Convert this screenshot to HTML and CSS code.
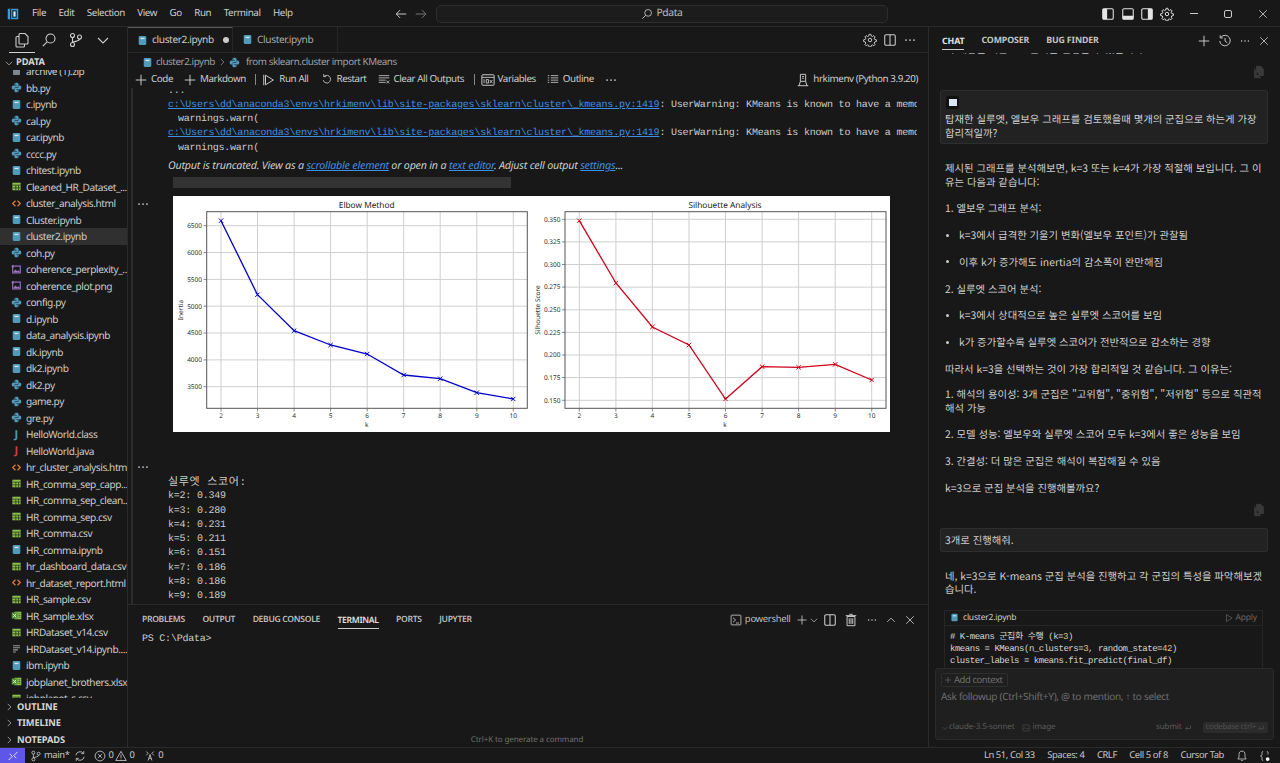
FILE: index.html
```html
<!DOCTYPE html>
<html lang="ko">
<head>
<meta charset="utf-8">
<title>Pdata</title>
<link rel="stylesheet" href="styles.css">
</head>
<body>
<svg class="defs" width="0" height="0">
  <defs>
    <symbol id="i-nb" viewBox="0 0 16 16"><rect x="2.5" y="1.5" width="11" height="13" rx="1.6" fill="#519aba"/><rect x="5" y="4" width="6" height="2" fill="#cfe6f2"/></symbol>
    <symbol id="i-py" viewBox="0 0 16 16"><g fill="#519aba" fill-rule="evenodd"><path d="M8 1C5.7 1 5 2 5 3v1.4h3.3V5H3.4C2 5 1 6.2 1 8s1 3 2.4 3H5V9.4c0-1 .8-1.9 2-1.900h2.300c1 0 1.700-.7 1.700-1.700V3c0-1-.9-2-3-2zM6.500 2.200a.7.7 0 110 1.400.7.7 0 010-1.400z"/><path d="M8 15c2.300 0 3-1 3-2v-1.400H7.700V11h4.900C14 11 15 9.800 15 8s-1-3-2.400-3H11v1.600c0 1-.8 1.900-2 1.900H6.700c-1 0-1.700.7-1.700 1.700V13c0 1 .9 2 3 2zM9.500 13.800a.7.7 0 110-1.400.7.7 0 010 1.400z"/></g></symbol>
    <symbol id="i-csv" viewBox="0 0 16 16"><rect x="2" y="2.500" width="12" height="11" fill="#8dc149"/><path d="M2 6h12M2 10h12M7 6v7.500M11 6v7.500" stroke="#2c3a18" stroke-width="1.200"/></symbol>
    <symbol id="i-html" viewBox="0 0 16 16"><path d="M6.500 4 2.500 8l4 4M9.500 4l4 4-4 4" fill="none" stroke="#e37933" stroke-width="1.800"/></symbol>
    <symbol id="i-img" viewBox="0 0 16 16"><rect x="2.500" y="3" width="11" height="10" fill="none" stroke="#a074c4" stroke-width="1.600"/><path d="M3 12l3.500-4 2.500 2.500 2-1.500 2 3z" fill="#a074c4"/><rect x="1" y="2" width="3" height="3" fill="#a074c4"/></symbol>
    <symbol id="i-xls" viewBox="0 0 16 16"><rect x="5" y="2.500" width="10" height="11" fill="#8dc149"/><rect x="1" y="3.500" width="8.500" height="9" fill="#4d8f33"/><path d="M3 5.500l4.500 5M7.500 5.500l-4.500 5" stroke="#e8f5dc" stroke-width="1.300"/><path d="M11 5.500h2.500M11 8h2.500M11 10.500h2.500" stroke="#2c3a18"/></symbol>
    <symbol id="i-txt" viewBox="0 0 16 16"><path d="M3 4h10M3 7h10M3 10h7M3 13h4" stroke="#999" stroke-width="1.500" fill="none"/></symbol>
    <symbol id="i-zip" viewBox="0 0 16 16"><rect x="3" y="4" width="10" height="9" fill="#7d8a94"/><rect x="3" y="4" width="10" height="2" fill="#aab4bb"/></symbol>
    <symbol id="i-chev-r" viewBox="0 0 16 16"><path d="M6 3l5 5-5 5" fill="none" stroke="currentColor" stroke-width="1.100"/></symbol>
    <symbol id="i-chev-d" viewBox="0 0 16 16"><path d="M3 6l5 5 5-5" fill="none" stroke="currentColor" stroke-width="1.100"/></symbol>
    <symbol id="i-plus" viewBox="0 0 16 16"><path d="M8 2v12M2 8h12" stroke="currentColor" stroke-width="1.100" fill="none"/></symbol>
    <symbol id="i-close" viewBox="0 0 16 16"><path d="M3 3l10 10M13 3L3 13" stroke="currentColor" stroke-width="1.100" fill="none"/></symbol>
    <symbol id="i-more" viewBox="0 0 16 16"><g fill="currentColor"><circle cx="3.500" cy="8" r="1"/><circle cx="8" cy="8" r="1"/><circle cx="12.500" cy="8" r="1"/></g></symbol>
    <symbol id="i-gear" viewBox="0 0 16 16"><g fill="none" stroke="currentColor" stroke-width="1.100"><circle cx="8" cy="8" r="2"/><path d="M7 1.500h2l.4 1.900 1.400.6 1.600-1 1.400 1.400-1 1.600.6 1.400 1.900.4v2l-1.900.4-.6 1.400 1 1.600-1.400 1.400-1.600-1-1.400.6-.4 1.900H7l-.4-1.900-1.400-.6-1.600 1-1.400-1.400 1-1.600-.6-1.400-1.900-.4v-2l1.900-.4.600-1.400-1-1.600 1.400-1.400 1.600 1 1.400-.6z"/></g></symbol>
    <symbol id="i-split" viewBox="0 0 16 16"><rect x="2" y="2" width="12" height="12" rx="1.500" fill="none" stroke="currentColor" stroke-width="1.200"/><path d="M8 2v12" stroke="currentColor" stroke-width="1.200"/></symbol>
    <symbol id="i-search" viewBox="0 0 16 16"><circle cx="9.500" cy="6.500" r="4.500" fill="none" stroke="currentColor" stroke-width="1.100"/><path d="M6.200 9.800 1.800 14.200" stroke="currentColor" stroke-width="1.200"/></symbol>
    <symbol id="i-arrow" viewBox="0 0 16 16"><path d="M14 8H2.500M7 3.500 2.500 8 7 12.500" fill="none" stroke="currentColor" stroke-width="1.100"/></symbol>
    <symbol id="i-files" viewBox="0 0 16 16"><g fill="none" stroke="currentColor" stroke-width="1.100"><path d="M6 1.500h5l3 3V11a1 1 0 01-1 1H6a1 1 0 01-1-1V2.500a1 1 0 011-1z"/><path d="M5 4.500H3a1 1 0 00-1 1V14a1 1 0 001 1h6.500a1 1 0 001-1v-2"/></g></symbol>
    <symbol id="i-branch" viewBox="0 0 16 16"><g fill="none" stroke="currentColor" stroke-width="1.100"><circle cx="4.500" cy="3.500" r="2"/><circle cx="4.500" cy="12.500" r="2"/><circle cx="11.500" cy="5" r="2"/><path d="M4.500 5.500v5M11.500 7c0 2.500-5 2-7 3.500"/></g></symbol>
    <symbol id="i-run" viewBox="0 0 16 16"><path d="M4 2.500 13 8l-9 5.500z" fill="none" stroke="currentColor" stroke-width="1.100"/><path d="M2 2v12" stroke="currentColor" stroke-width="1.100"/></symbol>
    <symbol id="i-restart" viewBox="0 0 16 16"><path d="M4 4.500A5.200 5.200 0 118 13.500a5.200 5.200 0 01-5-4M3.500 1.500v3.300h3.300" fill="none" stroke="currentColor" stroke-width="1.100"/></symbol>
    <symbol id="i-clear" viewBox="0 0 16 16"><path d="M1 3.500h14M1 6.500h14M1 9.500h9M1 12.500h9M11 10l4 4M15 10l-4 4" stroke="currentColor" stroke-width="1.100" fill="none"/></symbol>
    <symbol id="i-vars" viewBox="0 0 16 16"><rect x="1" y="2" width="14" height="12" rx="1" fill="none" stroke="currentColor" stroke-width="1.100"/><path d="M1 5h14M3.500 7v4.500M6 7.500v4h2.500v-4zM10 8l3 3.500M13 8l-3 3.500" fill="none" stroke="currentColor"/></symbol>
    <symbol id="i-outline" viewBox="0 0 16 16"><path d="M1 3.500h2M5 3.500h10M1 6.500h2M5 6.500h10M1 9.500h2M5 9.500h10M1 12.500h2M5 12.500h10" stroke="currentColor" stroke-width="1.100" fill="none"/></symbol>
    <symbol id="i-server" viewBox="0 0 16 16"><g fill="none" stroke="currentColor" stroke-width="1.100"><path d="M5 1.500h6v8H5zM7 4h2M7 6h2"/><path d="M3.500 14.500l1.500-5M12.500 14.500l-1.500-5M2 14.500h12"/></g></symbol>
    <symbol id="i-trash" viewBox="0 0 16 16"><path d="M3.500 4h9v10.500h-9zM2 3h12M6 1.500h4M6 6v6.500M8 6v6.500M10 6v6.500" fill="none" stroke="currentColor" stroke-width="1.100"/></symbol>
    <symbol id="i-term" viewBox="0 0 16 16"><rect x="1.500" y="1.500" width="13" height="13" rx="1" fill="none" stroke="currentColor" stroke-width="1.100"/><path d="M4 5l3.500 3L4 11M8 12h4" fill="none" stroke="currentColor" stroke-width="1.100"/></symbol>
    <symbol id="i-up" viewBox="0 0 16 16"><path d="M3 10.500l5-5 5 5" fill="none" stroke="currentColor" stroke-width="1.100"/></symbol>
    <symbol id="i-panel-l" viewBox="0 0 16 16"><rect x="2" y="2" width="12" height="12" rx="1.500" fill="none" stroke="currentColor" stroke-width="1.200"/><rect x="2" y="2" width="5" height="12" fill="currentColor"/></symbol>
    <symbol id="i-panel-r" viewBox="0 0 16 16"><rect x="2" y="2" width="12" height="12" rx="1.500" fill="none" stroke="currentColor" stroke-width="1.200"/><rect x="9" y="2" width="5" height="12" fill="currentColor"/></symbol>
    <symbol id="i-panel-b" viewBox="0 0 16 16"><rect x="2" y="2" width="12" height="12" rx="1.500" fill="none" stroke="currentColor" stroke-width="1.200"/><rect x="2" y="10" width="12" height="4" fill="currentColor"/></symbol>
    <symbol id="i-history" viewBox="0 0 16 16"><path d="M3.500 3.500A6 6 0 112 8M2.500 1.500v3h3M8 4.500V8l2.500 2" fill="none" stroke="currentColor" stroke-width="1.100"/></symbol>
    <symbol id="i-copy" viewBox="0 0 16 16"><path d="M5 1.500h5l3 3V12H5zM3 4v10.500h7" fill="#3a3a3a" stroke="#3a3a3a"/></symbol>
    <symbol id="i-sync" viewBox="0 0 16 16"><path d="M2.500 7a5.600 5.600 0 0110-2.500M13.500 9a5.600 5.600 0 01-10 2.500M13 1.500v3.300H9.700M3 14.500v-3.300h3.300" fill="none" stroke="currentColor" stroke-width="1.100"/></symbol>
    <symbol id="i-error" viewBox="0 0 16 16"><circle cx="8" cy="8" r="6.500" fill="none" stroke="currentColor" stroke-width="1.100"/><path d="M5.500 5.500l5 5M10.500 5.500l-5 5" stroke="currentColor" stroke-width="1.100"/></symbol>
    <symbol id="i-warn" viewBox="0 0 16 16"><path d="M8 1.800 15 14H1zM8 6v4.500M8 11.500v1" fill="none" stroke="currentColor" stroke-width="1.100"/></symbol>
    <symbol id="i-ports" viewBox="0 0 16 16"><path d="M3 2l2.500 2.500L3 7M13 2l-2.500 2.500L13 7M5.500 14l2.500-8 2.500 8M6.500 11h3" fill="none" stroke="currentColor" stroke-width="1.100"/></symbol>
    <symbol id="i-remote" viewBox="0 0 16 16"><path d="M2 13.500l5-5-3.500-3.500M14 2.500l-5 5 3.500 3.500" fill="none" stroke="currentColor" stroke-width="1.100"/></symbol>
    <symbol id="i-bell" viewBox="0 0 16 16"><path d="M8 1.500c-3 0-4 2-4 4.500v3.500L2.500 12h11L12 9.500V6c0-2.500-1-4.500-4-4.500zM6.500 13.500c.3 1 2.700 1 3 0" fill="none" stroke="currentColor" stroke-width="1.100"/></symbol>
    <symbol id="i-braces" viewBox="0 0 16 16"><path d="M5.500 2C3.500 2 4 4 4 6c0 1-1 2-2 2 1 0 2 1 2 2 0 2-.5 4 1.500 4M10.500 2c2 0 1.500 2 1.500 4" fill="none" stroke="currentColor" stroke-width="1.100"/><circle cx="11.500" cy="12" r="2.500" fill="#fff"/></symbol>
    <symbol id="i-mini" viewBox="0 0 16 16"><rect x="1.500" y="2" width="13" height="12" rx="1" fill="none" stroke="currentColor"/><path d="M2 11l4-4 3 3 2-2 3 3" stroke="currentColor" fill="none"/></symbol>
    <symbol id="i-enter" viewBox="0 0 16 16"><path d="M13 3v6H4M7 5.500 3.500 9 7 12.500" fill="none" stroke="currentColor" stroke-width="1.300"/></symbol>
    <symbol id="i-logo" viewBox="0 0 16 16"><rect x="1" y="1" width="14" height="14" fill="#3b9ad9"/><rect x="4" y="1" width="1.500" height="14" fill="#0f2a3a"/><rect x="7" y="3" width="6" height="10" fill="#0f2a3a"/><rect x="8.500" y="4.500" width="3" height="7" fill="#d7ecf8"/></symbol>
    <symbol id="i-stop" viewBox="0 0 16 16"><path d="M4 2.500 13 8l-9 5.500z" fill="none" stroke="currentColor" stroke-width="1.100"/></symbol>
    <marker id="mk-b" viewBox="0 0 6 6" refX="3" refY="3" markerWidth="6" markerHeight="6" markerUnits="userSpaceOnUse"><path d="M.8.800l4.400 4.400M5.200.800.800 5.200" stroke="#0000c8" stroke-width="1" fill="none"/></marker>
    <marker id="mk-r" viewBox="0 0 6 6" refX="3" refY="3" markerWidth="6" markerHeight="6" markerUnits="userSpaceOnUse"><path d="M.8.800l4.400 4.400M5.200.800.800 5.200" stroke="#d0001a" stroke-width="1" fill="none"/></marker>
  </defs>
</svg>

<div class="app">
  <header class="titlebar">
    <svg class="ic logo"><use href="#i-logo"/></svg>
    <nav class="menu">
      <span>File</span><span>Edit</span><span>Selection</span><span>View</span><span>Go</span><span>Run</span><span>Terminal</span><span>Help</span>
    </nav>
    <div class="nav-arrows">
      <svg class="ic"><use href="#i-arrow"/></svg>
      <svg class="ic flip dim"><use href="#i-arrow"/></svg>
    </div>
    <div class="cmd"><svg class="ic sm"><use href="#i-search"/></svg><span>Pdata</span></div>
    <div class="win">
      <div class="layout-btns">
        <svg class="ic"><use href="#i-panel-l"/></svg>
        <svg class="ic"><use href="#i-panel-b"/></svg>
        <svg class="ic"><use href="#i-panel-r"/></svg>
        <svg class="ic"><use href="#i-gear"/></svg>
      </div>
      <span class="win-btn"><span class="w-min"></span></span>
      <span class="win-btn"><span class="w-max"></span></span>
      <span class="win-btn"><svg class="ic sm"><use href="#i-close"/></svg></span>
    </div>
  </header>

  <div class="main">
    <aside class="sidebar">
      <div class="activity">
        <span class="act act-on"><svg class="ic lg"><use href="#i-files"/></svg></span>
        <span class="act"><svg class="ic lg"><use href="#i-search"/></svg></span>
        <span class="act"><svg class="ic lg"><use href="#i-branch"/></svg></span>
        <span class="act"><svg class="ic lg"><use href="#i-chev-d"/></svg></span>
      </div>
      <div class="side-head"><svg class="ic xs"><use href="#i-chev-d"/></svg><b>PDATA</b></div>
      <div class="tree">
        <ul class="files">
          <li><svg class="fi"><use href="#i-zip"/></svg>archive (1).zip</li>
          <li><svg class="fi"><use href="#i-py"/></svg>bb.py</li>
          <li><svg class="fi"><use href="#i-nb"/></svg>c.ipynb</li>
          <li><svg class="fi"><use href="#i-py"/></svg>cal.py</li>
          <li><svg class="fi"><use href="#i-nb"/></svg>car.ipynb</li>
          <li><svg class="fi"><use href="#i-py"/></svg>cccc.py</li>
          <li><svg class="fi"><use href="#i-nb"/></svg>chitest.ipynb</li>
          <li><svg class="fi"><use href="#i-csv"/></svg>Cleaned_HR_Dataset_...</li>
          <li><svg class="fi"><use href="#i-html"/></svg>cluster_analysis.html</li>
          <li><svg class="fi"><use href="#i-nb"/></svg>Cluster.ipynb</li>
          <li class="sel"><svg class="fi"><use href="#i-nb"/></svg>cluster2.ipynb</li>
          <li><svg class="fi"><use href="#i-py"/></svg>coh.py</li>
          <li><svg class="fi"><use href="#i-img"/></svg>coherence_perplexity_...</li>
          <li><svg class="fi"><use href="#i-img"/></svg>coherence_plot.png</li>
          <li><svg class="fi"><use href="#i-py"/></svg>config.py</li>
          <li><svg class="fi"><use href="#i-nb"/></svg>d.ipynb</li>
          <li><svg class="fi"><use href="#i-nb"/></svg>data_analysis.ipynb</li>
          <li><svg class="fi"><use href="#i-nb"/></svg>dk.ipynb</li>
          <li><svg class="fi"><use href="#i-nb"/></svg>dk2.ipynb</li>
          <li><svg class="fi"><use href="#i-py"/></svg>dk2.py</li>
          <li><svg class="fi"><use href="#i-py"/></svg>game.py</li>
          <li><svg class="fi"><use href="#i-py"/></svg>gre.py</li>
          <li><span class="fj fj-b">J</span>HelloWorld.class</li>
          <li><span class="fj fj-r">J</span>HelloWorld.java</li>
          <li><svg class="fi"><use href="#i-html"/></svg>hr_cluster_analysis.html</li>
          <li><svg class="fi"><use href="#i-csv"/></svg>HR_comma_sep_capp...</li>
          <li><svg class="fi"><use href="#i-csv"/></svg>HR_comma_sep_clean...</li>
          <li><svg class="fi"><use href="#i-csv"/></svg>HR_comma_sep.csv</li>
          <li><svg class="fi"><use href="#i-csv"/></svg>HR_comma.csv</li>
          <li><svg class="fi"><use href="#i-nb"/></svg>HR_comma.ipynb</li>
          <li><svg class="fi"><use href="#i-csv"/></svg>hr_dashboard_data.csv</li>
          <li><svg class="fi"><use href="#i-html"/></svg>hr_dataset_report.html</li>
          <li><svg class="fi"><use href="#i-csv"/></svg>HR_sample.csv</li>
          <li><svg class="fi"><use href="#i-xls"/></svg>HR_sample.xlsx</li>
          <li><svg class="fi"><use href="#i-csv"/></svg>HRDataset_v14.csv</li>
          <li><svg class="fi"><use href="#i-txt"/></svg>HRDataset_v14.ipynb....</li>
          <li><svg class="fi"><use href="#i-nb"/></svg>ibm.ipynb</li>
          <li><svg class="fi"><use href="#i-xls"/></svg>jobplanet_brothers.xlsx</li>
          <li><svg class="fi"><use href="#i-csv"/></svg>jobplanet_s.csv</li>
        </ul>
      </div>
      <div class="side-sec"><svg class="ic xs"><use href="#i-chev-r"/></svg><b>OUTLINE</b></div>
      <div class="side-sec"><svg class="ic xs"><use href="#i-chev-r"/></svg><b>TIMELINE</b></div>
      <div class="side-sec"><svg class="ic xs"><use href="#i-chev-r"/></svg><b>NOTEPADS</b></div>
    </aside>

    <section class="editor">
      <div class="tabs">
        <div class="tab tab-on"><svg class="fi"><use href="#i-nb"/></svg><span>cluster2.ipynb</span><i class="dot"></i></div>
        <div class="tab"><svg class="fi"><use href="#i-nb"/></svg><span>Cluster.ipynb</span></div>
        <div class="tab-actions">
          <svg class="ic"><use href="#i-gear"/></svg>
          <svg class="ic"><use href="#i-split"/></svg>
          <svg class="ic"><use href="#i-more"/></svg>
        </div>
      </div>
      <div class="crumbs">
        <svg class="fi"><use href="#i-nb"/></svg><span>cluster2.ipynb</span>
        <svg class="ic xs"><use href="#i-chev-r"/></svg>
        <svg class="fi"><use href="#i-py"/></svg><span class="crumb-last">from sklearn.cluster import KMeans</span>
      </div>
      <div class="nb-tools">
        <span class="tool t-code"><svg class="ic"><use href="#i-plus"/></svg>Code</span>
        <span class="tool t-md"><svg class="ic"><use href="#i-plus"/></svg>Markdown</span>
        <i class="vsep"></i>
        <span class="tool t-run"><svg class="ic"><use href="#i-run"/></svg>Run All</span>
        <span class="tool t-rs"><svg class="ic sm"><use href="#i-restart"/></svg>Restart</span>
        <span class="tool t-cl"><svg class="ic sm"><use href="#i-clear"/></svg>Clear All Outputs</span>
        <i class="vsep"></i>
        <span class="tool t-var"><svg class="ic"><use href="#i-vars"/></svg>Variables</span>
        <span class="tool t-out"><svg class="ic sm"><use href="#i-outline"/></svg>Outline</span>
        <svg class="ic t-more"><use href="#i-more"/></svg>
        <span class="tool kernel"><svg class="ic"><use href="#i-server"/></svg>hrkimenv (Python 3.9.20)</span>
      </div>

      <div class="notebook">
        <div class="out-a mono">
          <div>...</div>
          <div class="ln"><a>c:\Users\dd\anaconda3\envs\hrkimenv\lib\site-packages\sklearn\cluster\_kmeans.py:1419</a>: UserWarning: KMeans is known to have a memory leak on Windows with MKL</div>
          <div class="ln ind">warnings.warn(</div>
          <div class="ln"><a>c:\Users\dd\anaconda3\envs\hrkimenv\lib\site-packages\sklearn\cluster\_kmeans.py:1419</a>: UserWarning: KMeans is known to have a memory leak on Windows with MKL</div>
          <div class="ln ind">warnings.warn(</div>
        </div>
        <p class="trunc">Output is truncated. View as a <a>scrollable element</a> or open in a <a>text editor</a>. Adjust cell output <a>settings</a>...</p>
        <div class="hscroll"><i class="thumb"></i></div>
        <div class="cell-row chart-row">
          <svg class="ic gutter"><use href="#i-more"/></svg>
          <svg class="chart" viewBox="173 196 717 236" width="717" height="236">
            <rect x="173" y="196" width="717" height="236" fill="#fff"/>
            <g class="grid">
              <path d="M221 212v196M257.500 212v196M294.100 212v196M330.600 212v196M367.200 212v196M403.700 212v196M440.200 212v196M476.800 212v196M513.300 212v196"/>
              <path d="M207 225.700h320M207 252.500h320M207 279.400h320M207 306.200h320M207 333h320M207 359.900h320M207 386.700h320"/>
              <path d="M579.300 212v196M615.900 212v196M652.400 212v196M689 212v196M725.500 212v196M762.100 212v196M798.600 212v196M835.200 212v196M871.700 212v196"/>
              <path d="M565 219.300h321M565 241.900h321M565 264.500h321M565 287.100h321M565 309.800h321M565 332.400h321M565 355h321M565 377.600h321M565 400.300h321"/>
            </g>
            <rect class="spine" x="206.700" y="211.700" width="320.600" height="196.600"/>
            <rect class="spine" x="565" y="211.700" width="321" height="196.600"/>
            <path class="ticks" d="M221 408.500v3M257.500 408.500v3M294.100 408.500v3M330.600 408.500v3M367.200 408.500v3M403.700 408.500v3M440.200 408.500v3M476.800 408.500v3M513.300 408.500v3M579.300 408.500v3M615.900 408.500v3M652.400 408.500v3M689 408.500v3M725.500 408.500v3M762.100 408.500v3M798.600 408.500v3M835.200 408.500v3M871.700 408.500v3M203.500 225.700h3M203.500 252.500h3M203.500 279.400h3M203.500 306.200h3M203.500 333h3M203.500 359.900h3M203.500 386.700h3M562 219.300h3M562 241.900h3M562 264.500h3M562 287.100h3M562 309.800h3M562 332.400h3M562 355h3M562 377.600h3M562 400.300h3"/>
            <polyline class="ln-b" points="221,220.700 257.500,294.700 294.100,330.700 330.600,345 367.200,354 403.700,375 440.200,378.700 476.800,392.700 513.300,399"/>
            <polyline class="ln-r" points="579.300,220.700 615.900,283 652.400,327 689,345 725.500,399 762.100,366.700 798.600,367.300 835.200,364.300 871.700,380"/>
            <g class="t-title"><text x="366.700" y="207.500">Elbow Method</text><text x="725" y="207.500">Silhouette Analysis</text></g>
            <g class="t-x">
              <text x="221" y="418">2</text><text x="257.500" y="418">3</text><text x="294.100" y="418">4</text><text x="330.600" y="418">5</text><text x="367.200" y="418">6</text><text x="403.700" y="418">7</text><text x="440.200" y="418">8</text><text x="476.800" y="418">9</text><text x="513.300" y="418">10</text>
              <text x="366.700" y="426.500">k</text>
              <text x="579.300" y="418">2</text><text x="615.900" y="418">3</text><text x="652.400" y="418">4</text><text x="689" y="418">5</text><text x="725.500" y="418">6</text><text x="762.100" y="418">7</text><text x="798.600" y="418">8</text><text x="835.200" y="418">9</text><text x="871.700" y="418">10</text>
              <text x="725" y="426.500">k</text>
              <text transform="translate(182.500 310) rotate(-90)">Inertia</text>
              <text transform="translate(539.500 310) rotate(-90)">Silhouette Score</text>
            </g>
            <g class="t-y">
              <text x="202" y="228">6500</text><text x="202" y="254.800">6000</text><text x="202" y="281.700">5500</text><text x="202" y="308.500">5000</text><text x="202" y="335.300">4500</text><text x="202" y="362.200">4000</text><text x="202" y="389">3500</text>
              <text x="560.500" y="221.600">0.350</text><text x="560.500" y="244.200">0.325</text><text x="560.500" y="266.800">0.300</text><text x="560.500" y="289.400">0.275</text><text x="560.500" y="312.100">0.250</text><text x="560.500" y="334.700">0.225</text><text x="560.500" y="357.300">0.200</text><text x="560.500" y="379.900">0.175</text><text x="560.500" y="402.600">0.150</text>
            </g>
          </svg>
        </div>
        <div class="cell-row text-row">
          <svg class="ic gutter"><use href="#i-more"/></svg>
          <div class="scores mono">
            <div class="ko">실루엣 스코어:</div>
            <div>k=2: 0.349</div>
            <div>k=3: 0.280</div>
            <div>k=4: 0.231</div>
            <div>k=5: 0.211</div>
            <div>k=6: 0.151</div>
            <div>k=7: 0.186</div>
            <div>k=8: 0.186</div>
            <div>k=9: 0.189</div>
            <div>k=10: 0.172</div>
          </div>
        </div>
      </div>

      <div class="panel">
        <div class="panel-head">
          <span>PROBLEMS</span><span>OUTPUT</span><span>DEBUG CONSOLE</span><span class="p-on">TERMINAL</span><span>PORTS</span><span>JUPYTER</span>
          <div class="panel-actions">
            <svg class="ic sm"><use href="#i-term"/></svg><em>powershell</em>
            <svg class="ic sm pa-plus"><use href="#i-plus"/></svg>
            <svg class="ic xs pa-chev"><use href="#i-chev-d"/></svg>
            <svg class="ic pa-split"><use href="#i-split"/></svg>
            <svg class="ic"><use href="#i-trash"/></svg>
            <svg class="ic sm pa-more"><use href="#i-more"/></svg>
            <svg class="ic sm"><use href="#i-up"/></svg>
            <svg class="ic sm"><use href="#i-close"/></svg>
          </div>
        </div>
        <div class="term mono">PS C:\Pdata&gt;</div>
        <div class="gen-hint">Ctrl+K to generate a command</div>
      </div>
    </section>

    <section class="chat">
      <div class="chat-head">
        <span class="c-on">CHAT</span><span>COMPOSER</span><span>BUG FINDER</span>
        <div class="chat-actions">
          <svg class="ic"><use href="#i-plus"/></svg>
          <svg class="ic"><use href="#i-history"/></svg>
          <svg class="ic sm"><use href="#i-more"/></svg>
          <svg class="ic sm"><use href="#i-close"/></svg>
        </div>
      </div>
      <div class="chat-scroll">
        <p class="clip">이 내용을 기준으로 분석을 진행할 수 있습니다.</p>
        <div class="copy-row"><svg class="ic"><use href="#i-copy"/></svg></div>
        <div class="msg msg-img">
          <span class="thumb-chip"><i></i></span>
          <div>탑재한 실루엣, 엘보우 그래프를 검토했을때 몇개의 군집으로 하는게 가장 합리적일까?</div>
        </div>
        <div class="reply">
          <p>제시된 그래프를 분석해보면, k=3 또는 k=4가 가장 적절해 보입니다. 그 이유는 다음과 같습니다:</p>
          <p>1. 엘보우 그래프 분석:</p>
          <p class="bul">k=3에서 급격한 기울기 변화(엘보우 포인트)가 관찰됨</p>
          <p class="bul">이후 k가 증가해도 inertia의 감소폭이 완만해짐</p>
          <p>2. 실루엣 스코어 분석:</p>
          <p class="bul">k=3에서 상대적으로 높은 실루엣 스코어를 보임</p>
          <p class="bul">k가 증가할수록 실루엣 스코어가 전반적으로 감소하는 경향</p>
          <p class="tight">따라서 k=3을 선택하는 것이 가장 합리적일 것 같습니다. 그 이유는:</p>
          <p>1. 해석의 용이성: 3개 군집은 "고위험", "중위험", "저위험" 등으로 직관적 해석 가능</p>
          <p>2. 모델 성능: 엘보우와 실루엣 스코어 모두 k=3에서 좋은 성능을 보임</p>
          <p>3. 간결성: 더 많은 군집은 해석이 복잡해질 수 있음</p>
          <p>k=3으로 군집 분석을 진행해볼까요?</p>
        </div>
        <div class="copy-row c2"><svg class="ic"><use href="#i-copy"/></svg></div>
        <div class="msg msg-short">3개로 진행해줘.</div>
        <div class="reply r2">
          <p>네, k=3으로 K-means 군집 분석을 진행하고 각 군집의 특성을 파악해보겠습니다.</p>
        </div>
        <div class="code-card">
          <div class="code-head"><svg class="fi"><use href="#i-nb"/></svg><span>cluster2.ipynb</span><em><svg class="ic xs"><use href="#i-stop"/></svg>Apply</em></div>
          <pre class="mono"># K-means 군집화 수행 (k=<b>3</b>)
kmeans = KMeans(n_clusters=<b>3</b>, random_state=<b>42</b>)
cluster_labels = kmeans.fit_predict(final_df)</pre>
        </div>
      </div>
      <div class="composer">
        <div class="add-ctx"><svg class="ic xs"><use href="#i-plus"/></svg>Add context</div>
        <div class="ask">Ask followup (Ctrl+Shift+Y), @ to mention, ↑ to select</div>
        <div class="comp-foot">
          <svg class="ic tiny"><use href="#i-chev-d"/></svg><span>claude-3.5-sonnet</span>
          <span class="img-chip"><svg class="ic tiny"><use href="#i-mini"/></svg>image</span>
          <span class="submit">submit <svg class="ic tiny"><use href="#i-enter"/></svg></span>
          <span class="codebase">codebase ctrl+<svg class="ic tiny"><use href="#i-enter"/></svg></span>
        </div>
      </div>
    </section>
  </div>

  <footer class="status">
    <span class="remote"><svg class="ic sm"><use href="#i-remote"/></svg></span>
    <span class="st st-branch"><svg class="ic sm"><use href="#i-branch"/></svg>main*<svg class="ic sm"><use href="#i-sync"/></svg></span>
    <span class="st st-err"><svg class="ic sm"><use href="#i-error"/></svg>0<svg class="ic sm"><use href="#i-warn"/></svg>0</span>
    <span class="st st-port"><svg class="ic sm"><use href="#i-ports"/></svg>0</span>
    <div class="st-right">
      <span>Ln 51, Col 33</span><span>Spaces: 4</span><span>CRLF</span><span>Cell 5 of 8</span><span>Cursor Tab</span>
      <svg class="ic sm"><use href="#i-bell"/></svg>
      <svg class="ic sm"><use href="#i-braces"/></svg>
    </div>
  </footer>
</div>
</body>
</html>
```
FILE: styles.css
```css
* { box-sizing: border-box; }
html, body { margin: 0; height: 100%; background: #181818; overflow: hidden; }
body { font: 10.1px/1.3 "Noto Sans", "Noto Sans CJK KR", sans-serif; letter-spacing: -0.35px; color: #cccccc; text-rendering: geometricPrecision; }
.defs { position: absolute; }
.app { width: 1280px; height: 763px; display: flex; flex-direction: column; }
ul, p, pre { margin: 0; padding: 0; }
a { color: #3f8fe0; text-decoration: underline; }
.mono { font-family: "Liberation Mono", "Noto Sans CJK KR", monospace; font-size: 10px; letter-spacing: -0.22px; }

.ic { width: 14px; height: 14px; flex: none; display: block; color: #cccccc; }
.ic.sm { width: 12px; height: 12px; }
.ic.xs { width: 10px; height: 10px; }
.ic.tiny { width: 8px; height: 8px; color: inherit; }
.ic.lg { width: 16px; height: 16px; }
.fi { width: 11px; height: 11px; flex: none; display: block; }

/* title bar */
.titlebar { height: 27px; flex: none; display: flex; align-items: center; border-bottom: 1px solid #2b2b2b; padding: 1px 0 0 7px; }
.logo { width: 12px; height: 12px; }
.menu { display: flex; gap: 12.500px; margin-left: 13px; width: 362px; font-size: 9.800px; letter-spacing: -0.42px; }
.nav-arrows { display: flex; gap: 6px; width: 39px; }
.flip { transform: scaleX(-1); }
.dim { color: #777; }
.cmd { width: 452px; height: 18px; border: 1px solid #2e2e2e; border-radius: 5px; display: flex; align-items: center; justify-content: center; gap: 3px; background: #1c1c1c; font-size: 10.300px; color: #bbb; margin-left: 3px; }
.win { margin-left: auto; display: flex; align-items: center; }
.layout-btns { display: flex; gap: 5.500px; margin-right: 3px; }
.layout-btns .ic { color: #e4e4e4; }
.win-btn { width: 34.500px; height: 26px; display: flex; align-items: center; justify-content: center; }
.w-min { width: 8px; height: 1px; background: #ccc; }
.w-max { width: 8px; height: 8px; border: 1px solid #ccc; border-radius: 2px; }

.main { flex: 1; display: flex; min-height: 0; }

/* sidebar */
.sidebar { width: 128px; flex: none; border-right: 1px solid #2b2b2b; display: flex; flex-direction: column; }
.activity { height: 26px; flex: none; display: flex; align-items: center; gap: 11px; padding: 0 9px 0 14px; }
.act { display: flex; height: 26px; align-items: center; position: relative; }
.act-on::after { content: ""; position: absolute; left: -5px; right: -5px; bottom: 0; height: 1px; background: #d0d0d0; }
.side-head { height: 17px; flex: none; display: flex; align-items: center; gap: 2px; padding: 2px 0 0 4px; font-size: 9.300px; letter-spacing: -0.1px; }
.side-head b, .side-sec b { font-weight: 700; color: #d5d5d5; }
.tree { flex: 1; overflow: hidden; min-height: 0; position: relative; }
.files { list-style: none; margin-top: -7px; letter-spacing: -0.43px; }
.files li { height: 16.500px; line-height: 16.500px; display: flex; align-items: center; padding-left: 10.500px; gap: 4.500px; white-space: nowrap; overflow: hidden; }
.files li.sel { background: #303031; }
.fj { width: 11px; text-align: center; font-weight: 700; font-size: 11px; line-height: 1; }
.fj-b { color: #519aba; }
.fj-r { color: #cc3e44; }
.side-sec { height: 16.500px; flex: none; display: flex; align-items: center; gap: 3px; padding: 2px 0 0 4px; font-size: 9.300px; letter-spacing: -0.1px; }

/* editor */
.editor { width: 801px; flex: none; display: flex; flex-direction: column; border-right: 1px solid #2b2b2b; min-height: 0; }
.tabs { height: 26px; flex: none; display: flex; border-bottom: 1px solid #2b2b2b; }
.tab { width: 105px; display: flex; align-items: center; gap: 4px; padding-left: 9px; border-right: 1px solid #262626; color: #aaa; }
.tab-on { border-top: 1px solid #5a5a5a; color: #ccc; }
.tab-on span { width: 60px; }
.dot { width: 6px; height: 6px; border-radius: 50%; background: #ccc; margin-left: 7px; }
.tab-actions { margin-left: auto; display: flex; align-items: center; gap: 6px; padding-right: 11px; }
.crumbs { height: 18px; flex: none; display: flex; align-items: center; gap: 3px; padding-left: 14px; color: #a0a0a0; font-size: 9.800px; letter-spacing: -0.42px; }
.crumbs .ic { color: #999; margin: 0 -1px 0 -1px; }
.crumb-last { margin-left: 3px; }
.nb-tools { height: 17px; flex: none; display: flex; align-items: center; padding-left: 6px; padding-right: 10px; font-size: 9.800px; letter-spacing: -0.42px; }
.tool { display: flex; align-items: center; gap: 3px; white-space: nowrap; }
.t-md { margin-left: 10px; }
.vsep { width: 1px; height: 11px; background: #888; margin: 0 6px 0 9.500px; flex: none; }
.t-rs { margin-left: 13px; }
.t-cl { margin-left: 12px; }
.t-out { margin-left: 11px; gap: 4px; }
.t-more { margin-left: 10px; }
.kernel { margin-left: auto; gap: 3px; }

.notebook { flex: 1; min-height: 0; overflow: hidden; margin-left: 3px; border-left: 2px solid #2b2b2b; padding-left: 35px; padding-right: 11px; position: relative; }
.out-a { line-height: 14.300px; white-space: nowrap; overflow: hidden; margin-top: -3.500px; }
.out-a a { color: #3f8fe0; }
.ind { padding-left: 10px; }
.trunc { font-style: italic; font-size: 10.700px; letter-spacing: -0.2px; line-height: 14px; margin-top: 3px; white-space: nowrap; }
.hscroll { height: 11px; margin: 4.500px 0 0 5px; width: 717px; background: #181818; }
.thumb { display: block; width: 338px; height: 11px; background: #333333; }
.cell-row { position: relative; }
.chart-row { padding: 8px 0 0 5px; }
.chart { display: block; letter-spacing: normal; }
.gutter { position: absolute; left: -32px; top: 0; }
.chart-row .gutter { margin-top: 9px; }
.text-row { padding-top: 43.500px; }
.text-row .gutter { top: 28px; }
.scores { line-height: 14.300px; }
.ko { font-size: 11px; letter-spacing: 0.6px; }

.grid path { stroke: #cfcfcf; stroke-width: 1; fill: none; }
.spine { fill: none; stroke: #555; stroke-width: 1; }
.ticks { stroke: #555; stroke-width: .7; fill: none; }
.ln-b { fill: none; stroke: #0000c8; stroke-width: 1.300; marker-start: url(#mk-b); marker-mid: url(#mk-b); marker-end: url(#mk-b); }
.ln-r { fill: none; stroke: #d0001a; stroke-width: 1.300; marker-start: url(#mk-r); marker-mid: url(#mk-r); marker-end: url(#mk-r); }
.chart text { font-family: "Noto Sans", sans-serif; fill: #333; }
.t-title text { font-size: 8.300px; text-anchor: middle; fill: #222; }
.t-x text { font-size: 6.500px; text-anchor: middle; }
.t-y text { font-size: 6.500px; text-anchor: end; }

/* panel */
.panel { height: 143px; flex: none; border-top: 1px solid #2b2b2b; position: relative; background: #181818; }
.panel-head { height: 29px; display: flex; align-items: center; padding-left: 14px; gap: 17.500px; font-size: 8.600px; letter-spacing: -0.32px; font-weight: 600; color: #bdbdbd; }
.p-on { color: #e0e0e0; border-bottom: 1px solid #ccc; line-height: 15px; padding-top: 1px; margin-top: 1px; }
.panel-actions { margin-left: auto; display: flex; align-items: center; gap: 7px; padding-right: 12px; font-weight: 400; }
.panel-actions em { font-style: normal; font-size: 9.500px; margin-left: -4px; }
.pa-plus { margin-left: -2px; }
.pa-chev { margin-left: -6px; }
.pa-split { margin-left: -2.500px; }
.pa-more { margin-left: 1px; }
.term { padding-left: 14px; line-height: 12px; margin-top: 0; }
.gen-hint { position: absolute; left: 0; right: 0; bottom: 1px; text-align: center; font-size: 8px; letter-spacing: -0.1px; color: #6f6f6f; line-height: 12px; padding-right: 2px; }

/* chat */
.chat { flex: 1; min-width: 0; position: relative; display: flex; flex-direction: column; font-family: "Noto Sans CJK KR", "Noto Sans", sans-serif; letter-spacing: normal; }
.chat-head { height: 26px; flex: none; display: flex; align-items: center; gap: 17px; padding: 1px 0 0 13px; font-family: "Noto Sans", sans-serif; font-size: 8.800px; letter-spacing: -0.12px; font-weight: 700; color: #c5c5c5; }
.c-on { color: #e6e6e6; border-bottom: 1px solid #ccc; line-height: 15px; padding-top: 1px; margin-top: 2px; }
.chat-actions { margin-left: auto; display: flex; align-items: center; gap: 7px; padding-right: 10px; }
.chat-scroll { flex: 1; min-height: 0; overflow: hidden; padding: 0 12px 0 11px; font-size: 10.350px; }
.clip { margin-top: -11px; height: 14px; line-height: 13px; padding-left: 5px; color: #ccc; white-space: nowrap; }
.copy-row { display: flex; justify-content: flex-end; margin-top: 9px; padding-right: 2px; height: 14px; }
.msg { background: #222223; border: 1px solid #2e2e2e; border-radius: 2px; padding: 0 4px; line-height: 13.500px; color: #d0d0d0; }
.msg-img { margin-top: 11px; height: 54px; padding-top: 5px; }
.thumb-chip { display: flex; width: 13px; height: 13px; background: #111; border-radius: 2px; align-items: center; justify-content: center; margin-left: 1px; margin-bottom: 3px; }
.thumb-chip i { width: 8px; height: 7px; background: #dde6f0; }
.reply { padding: 0 5px 0 5px; margin-top: 17px; line-height: 13.500px; color: #cfcfcf; }
.reply p { margin-bottom: 13.300px; }
.reply .bul { padding-left: 14px; position: relative; }
.bul::before { content: ""; position: absolute; left: 1px; top: 5.500px; width: 3px; height: 3px; border-radius: 50%; background: #ccc; }
.reply .tight { margin-bottom: 11.500px; }
.c2 { margin-top: -5px; }
.msg-short { margin-top: 11px; height: 24px; line-height: 22px; }
.r2 { margin-top: 17px; }
.r2 p { margin-bottom: 0; }
.code-card { margin-top: 14px; margin-left: 4px; margin-right: 5px; border: 1px solid #262626; height: 80px; }
.code-head { height: 15px; display: flex; align-items: center; gap: 4px; padding-left: 5px; border-bottom: 1px solid #262626; font-family: "Noto Sans", sans-serif; font-size: 8.500px; letter-spacing: -0.2px; }
.code-head .fi { width: 9px; height: 9px; }
.code-head em { margin-left: auto; font-style: normal; color: #666; display: flex; gap: 2px; align-items: center; padding-right: 5px; }
.code-head em .ic { color: #666; }
.code-card pre { padding: 5px 0 0 5px; line-height: 12px; font-size: 9px; letter-spacing: -0.47px; color: #d4d4d4; }
.code-card b { font-weight: 400; color: #e5c07b; }

.composer { position: absolute; left: 6px; right: 6px; top: 641px; height: 72px; background: #1f1f1f; border: 1px solid #2a2a2a; border-radius: 3px; padding: 4px 5px; font-family: "Noto Sans", sans-serif; color: #6e6e6e; }
.add-ctx { display: inline-flex; align-items: center; gap: 2px; height: 14px; padding: 0 4px 0 2px; border: 1px solid #2e2e2e; border-radius: 2px; font-size: 9.500px; letter-spacing: -0.45px; }
.add-ctx .ic { color: #777; width: 8px; height: 8px; }
.ask { margin-top: 2px; font-size: 10px; letter-spacing: -0.3px; line-height: 14px; }
.comp-foot { margin-top: 19px; display: flex; align-items: center; gap: 3px; font-size: 8px; letter-spacing: -0.1px; color: #5c5c5c; }
.comp-foot > .ic:first-child { margin-right: -3px; }
.img-chip { display: flex; gap: 2px; align-items: center; margin-left: 5px; }
.submit { margin-left: auto; display: flex; gap: 2px; align-items: center; }
.codebase { margin-left: 8px; display: flex; align-items: center; gap: 1px; padding: 0 3px; height: 11px; background: #2b2b2b; border-radius: 2px; color: #4e4e4e; letter-spacing: -0.3px; }

/* status */
.status { height: 16px; flex: none; display: flex; align-items: center; border-top: 1px solid #2b2b2b; font-size: 9.400px; letter-spacing: -0.4px; color: #c5c5c5; }
.remote { width: 25px; height: 15px; background: #5f55e8; display: flex; align-items: center; justify-content: center; flex: none; }
.remote .ic { color: #fff; }
.st { display: flex; align-items: center; gap: 2px; }
.st-branch { margin-left: 5px; }
.st-branch .ic:last-child { margin-left: 3px; }
.st-err { margin-left: 8px; }
.st-port { margin-left: 10px; }
.st-right { margin-left: auto; display: flex; align-items: center; gap: 12.500px; padding-right: 9px; }
.st-right .ic { margin-left: -1px; }
```
